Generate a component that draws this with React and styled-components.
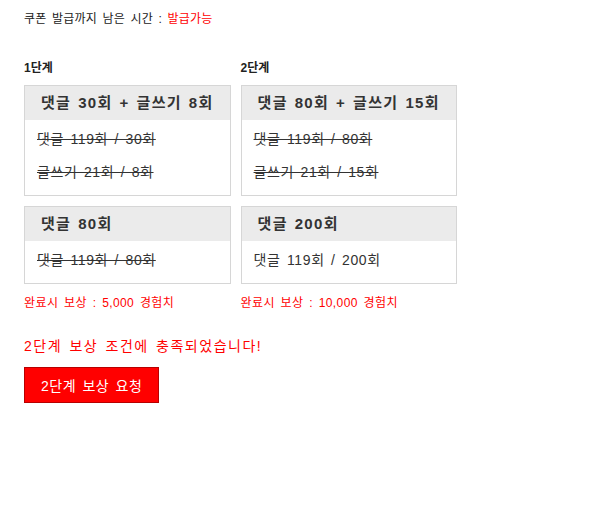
import styled, { createGlobalStyle } from 'styled-components'

const GlobalStyle = createGlobalStyle`
  body {
    margin: 0;
    background: #fff;
    font-family: "Liberation Sans", "Noto Sans CJK KR", sans-serif;
    color: #333;
  }
`

const stages = [
  {
    label: '1단계',
    reward: '5,000',
    boxes: [
      {
        title: '댓글 30회 + 글쓰기 8회',
        lines: [
          { text: '댓글 119회 / 30회', done: true },
          { text: '글쓰기 21회 / 8회', done: true }
        ]
      },
      {
        title: '댓글 80회',
        lines: [{ text: '댓글 119회 / 80회', done: true }]
      }
    ]
  },
  {
    label: '2단계',
    reward: '10,000',
    boxes: [
      {
        title: '댓글 80회 + 글쓰기 15회',
        lines: [
          { text: '댓글 119회 / 80회', done: true },
          { text: '글쓰기 21회 / 15회', done: true }
        ]
      },
      {
        title: '댓글 200회',
        lines: [{ text: '댓글 119회 / 200회', done: false }]
      }
    ]
  }
]

const App = () => {
  return (
    <Page>
      <GlobalStyle />
      <Countdown>
        쿠폰 발급까지 남은 시간 : <Red>발급가능</Red>
      </Countdown>

      <Stages>
        {stages.map(stage => (
          <Column key={stage.label}>
            <StageLabel>{stage.label}</StageLabel>
            {stage.boxes.map((box, j) => (
              <Box key={j}>
                <BoxHeader>{box.title}</BoxHeader>
                <BoxBody>
                  {box.lines.map((line, k) => (
                    <Line key={k} $done={line.done}>{line.text}</Line>
                  ))}
                </BoxBody>
              </Box>
            ))}
            <Reward>완료시 보상 : {stage.reward} 경험치</Reward>
          </Column>
        ))}
      </Stages>

      <Message>2단계 보상 조건에 충족되었습니다!</Message>
      <RequestButton>2단계 보상 요청</RequestButton>
    </Page>
  )
}

const Page = styled.div`
  padding: 12px 24px;
`

const Countdown = styled.div`
  font-size: 12px;
  line-height: 14px;
  color: #222;
  letter-spacing: 0.2px;
  word-spacing: 2px;
`

const Red = styled.span`
  color: #ff0000;
`

const Stages = styled.div`
  display: flex;
  align-items: flex-start;
  gap: 10px;
  margin-top: 34px;
`

const Column = styled.div`
  display: flex;
  flex-direction: column;
  align-items: stretch;
`

const StageLabel = styled.div`
  font-size: 12px;
  font-weight: bold;
  line-height: 16px;
  color: #222;
  margin-bottom: 9px;
`

const Box = styled.div`
  border: 1px solid #d6d6d6;
  background: #fff;
  & + & {
    margin-top: 10px;
  }
`

const BoxHeader = styled.div`
  background: #ebebeb;
  height: 34px;
  line-height: 34px;
  padding: 0 16px;
  font-size: 15px;
  font-weight: bold;
  color: #333;
  letter-spacing: 1.3px;
  word-spacing: 1.5px;
  white-space: nowrap;
`

const BoxBody = styled.div`
  padding: 3px 12px 6px;
`

const Line = styled.div`
  font-size: 14px;
  line-height: 33px;
  color: #333;
  letter-spacing: 0.6px;
  word-spacing: 2px;
  white-space: nowrap;
  text-decoration: ${p => (p.$done ? 'line-through' : 'none')};
`

const Reward = styled.div`
  margin-top: 12px;
  font-size: 12px;
  line-height: 14px;
  color: #ff0000;
  letter-spacing: 0.4px;
  word-spacing: 2px;
`

const Message = styled.div`
  margin-top: 26px;
  font-size: 14px;
  line-height: 20px;
  color: #ff0000;
  letter-spacing: 1.5px;
  word-spacing: 2px;
`

const RequestButton = styled.button`
  margin-top: 11px;
  height: 36px;
  padding: 0 16px;
  background: #ff0000;
  border: 1px solid #b80000;
  color: #fff;
  font-family: inherit;
  font-size: 14px;
  letter-spacing: 0.5px;
  word-spacing: 2px;
  cursor: pointer;
`

export default App
